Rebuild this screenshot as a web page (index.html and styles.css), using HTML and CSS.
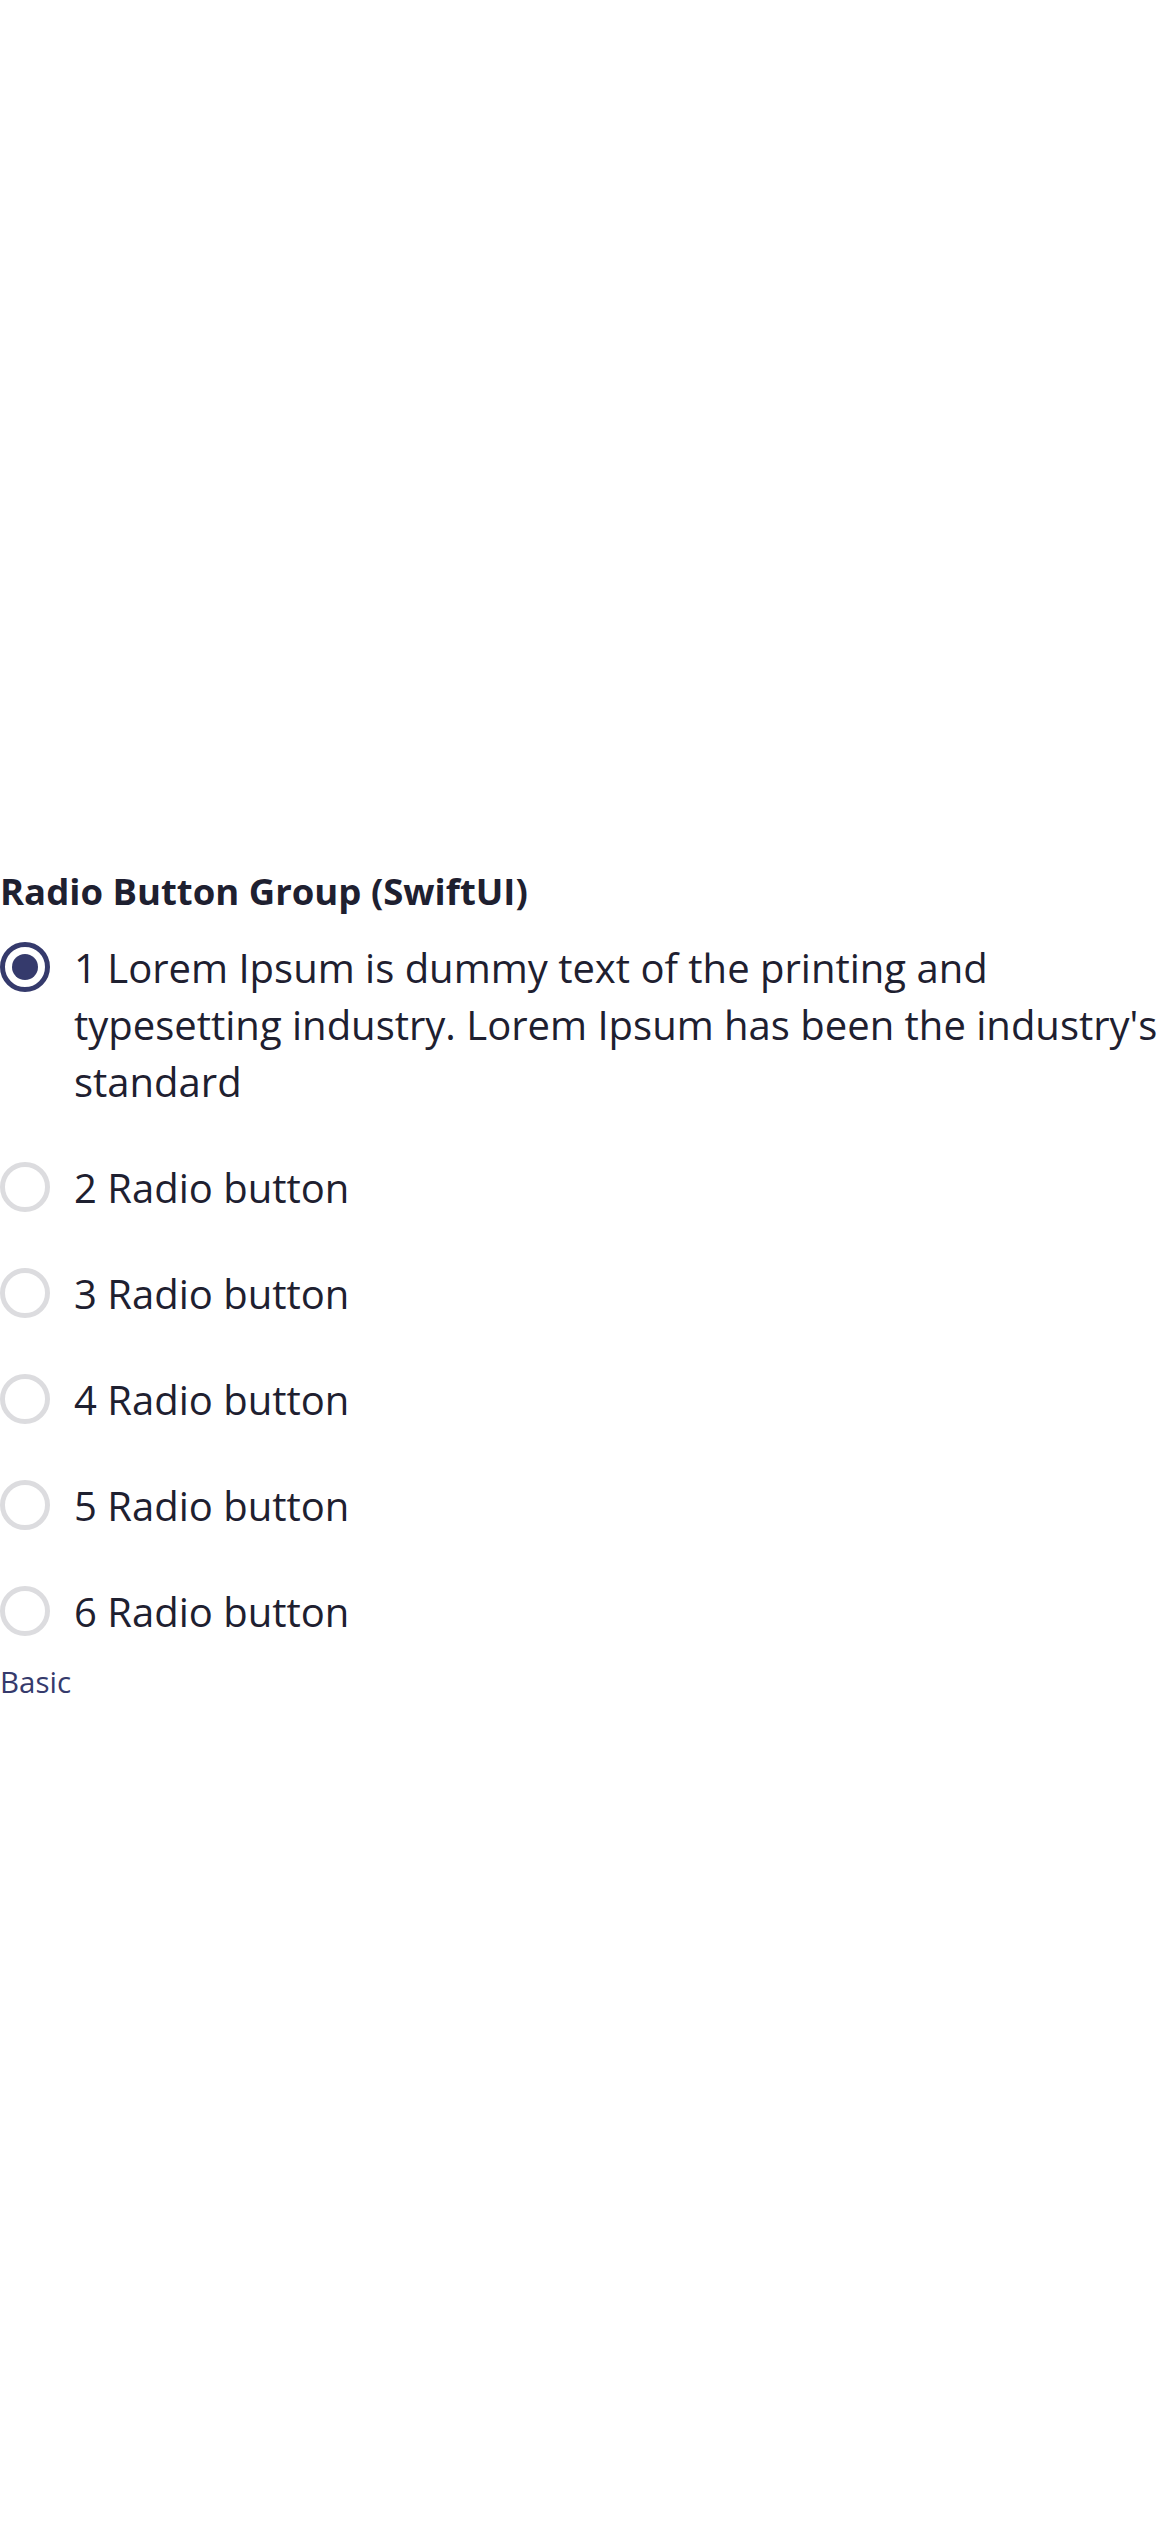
FILE: index.html
```html
<!DOCTYPE html>
<html lang="en">
<head>
<meta charset="utf-8">
<title>Radio Button Group (SwiftUI)</title>
<link rel="stylesheet" href="styles.css">
</head>
<body>
<main class="screen">
  <section class="group">
    <h1 class="title">Radio Button Group (SwiftUI)</h1>
    <div class="options" role="radiogroup">
      <div class="option" role="radio" aria-checked="true">
        <span class="radio radio-on"><span class="dot"></span></span>
        <span class="label">1 Lorem Ipsum is dummy text of the printing and typesetting industry. Lorem Ipsum has been the industry's standard</span>
      </div>
      <div class="option" role="radio" aria-checked="false">
        <span class="radio"></span>
        <span class="label">2 Radio button</span>
      </div>
      <div class="option" role="radio" aria-checked="false">
        <span class="radio"></span>
        <span class="label">3 Radio button</span>
      </div>
      <div class="option" role="radio" aria-checked="false">
        <span class="radio"></span>
        <span class="label">4 Radio button</span>
      </div>
      <div class="option" role="radio" aria-checked="false">
        <span class="radio"></span>
        <span class="label">5 Radio button</span>
      </div>
      <div class="option" role="radio" aria-checked="false">
        <span class="radio"></span>
        <span class="label">6 Radio button</span>
      </div>
    </div>
    <p class="caption">Basic</p>
  </section>
</main>
</body>
</html>
```

FILE: styles.css
```css
* {
  box-sizing: border-box;
}

html, body {
  margin: 0;
  padding: 0;
  background: #ffffff;
}

body {
  font-family: "Open Sans", "Noto Sans", sans-serif;
  color: #1e2030;
}

.screen {
  width: 1170px;
  min-height: 2532px;
  padding-top: 868px;
}

.group {
  display: flex;
  flex-direction: column;
}

.title {
  margin: 0;
  font-size: 36.5px;
  line-height: 46px;
  font-weight: 700;
  color: #1e2030;
}

.options {
  display: flex;
  flex-direction: column;
  gap: 49px;
  margin-top: 25px;
}

.option {
  display: flex;
  align-items: flex-start;
  gap: 24px;
}

.radio {
  flex: 0 0 auto;
  width: 50px;
  height: 50px;
  margin-top: 3px;
  border-radius: 50%;
  border: 5px solid #dcdcdf;
  display: flex;
  align-items: center;
  justify-content: center;
}

.radio-on {
  border-color: #353a6c;
}

.dot {
  width: 26px;
  height: 26px;
  border-radius: 50%;
  background: #353a6c;
}

.label {
  font-size: 40px;
  line-height: 57px;
  font-weight: 400;
  color: #1e2030;
}

.caption {
  margin: 23px 0 0;
  font-size: 29.5px;
  line-height: 38px;
  color: #353a6c;
}
```
